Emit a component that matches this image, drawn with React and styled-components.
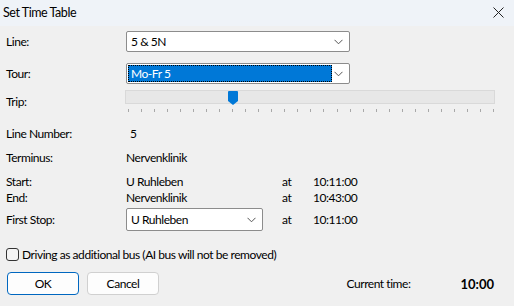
import styled, { createGlobalStyle } from "styled-components";

const Global = createGlobalStyle`
  html, body { margin: 0; padding: 0; background: #f0f0f0; }
  body { font-family: Lato, "Noto Sans", sans-serif; font-size: 12px; letter-spacing: -0.45px; color: #000; }
`;

const Dialog = styled.div`
  width: 514px;
  height: 306px;
  background: #f0f0f0;
  display: flex;
  flex-direction: column;
  overflow: hidden;
`;

const TitleBar = styled.div`
  height: 24px;
  background: #eff3f8;
  display: flex;
  align-items: center;
  justify-content: space-between;
  padding: 0 10px 2px 3px;
  font-size: 12.5px;
`;

const Body = styled.div`
  padding: 5px 0 0 6px;
  display: flex;
  flex-direction: column;
`;

const Row = styled.div`
  display: flex;
  align-items: ${(p) => p.align || "center"};
  height: ${(p) => p.h || 16}px;
  margin-top: ${(p) => p.mt || 0}px;
`;

const Label = styled.div`
  width: ${(p) => p.w || 120}px;
  flex-shrink: 0;
  margin-top: ${(p) => p.mt || 0}px;
`;

const Value = styled.div`
  width: ${(p) => p.w || 156}px;
  padding-left: ${(p) => p.pl || 0}px;
  flex-shrink: 0;
`;

const Combo = styled.div`
  width: ${(p) => p.w}px;
  height: ${(p) => p.h || 21}px;
  box-sizing: border-box;
  background: #fff;
  border: 1px solid #8c8c8c;
  border-radius: 2px;
  display: flex;
  align-items: center;
  padding: 1px;
  position: relative;
`;

const ComboText = styled.div`
  flex: 1;
  height: 100%;
  display: flex;
  align-items: center;
  padding-left: 3px;
  box-sizing: border-box;
  ${(p) =>
    p.selected &&
    `
    background: #0078d7;
    color: #fff;
    outline: 1px dotted #000;
    outline-offset: -1px;
    margin-right: 16px;
  `}
`;

const Chevron = styled.svg`
  position: absolute;
  right: 6px;
  top: 50%;
  margin-top: -3px;
`;

const Track = styled.div`
  width: 370px;
  height: 14px;
  box-sizing: border-box;
  background: #e7e7e7;
  border: 1px solid #d9d9d9;
  position: relative;
`;

const Thumb = styled.svg`
  position: absolute;
  left: 102px;
  top: 0px;
`;

const Ticks = styled.div`
  display: flex;
  justify-content: space-between;
  width: 366px;
  margin-left: 122px;
  margin-top: 5px;
  height: 3px;
`;

const Tick = styled.span`
  width: 1px;
  height: 3px;
  background: #a8a8a8;
`;

const Check = styled.span`
  width: 13px;
  height: 13px;
  box-sizing: border-box;
  border: 1px solid #333;
  border-radius: 3px;
  background: #f4f4f4;
  margin-right: 3px;
`;

const Footer = styled.div`
  display: flex;
  align-items: center;
  padding: 0 0 0 7px;
  margin-top: 11px;
  height: 23px;
`;

const Button = styled.button`
  width: 72px;
  height: 23px;
  margin-right: 8px;
  font: inherit;
  letter-spacing: inherit;
  background: #fdfdfd;
  border: 1px solid ${(p) => (p.primary ? "#0067c0" : "#d0d0d0")};
  border-radius: 4px;
  color: #000;
  padding: 0;
`;

const Current = styled.div`
  margin-left: auto;
  display: flex;
  align-items: center;
  padding-right: 20px;
`;

const Clock = styled.span`
  font-weight: bold;
  font-size: 13px;
  letter-spacing: 0;
  margin-left: 50px;
`;

const ChevronIcon = () => (
  <Chevron width="9" height="6" viewBox="0 0 9 6">
    <path d="M0.5 0.8 L4.5 4.8 L8.5 0.8" fill="none" stroke="#555" strokeWidth="1" />
  </Chevron>
);

export default function App() {
  const ticks = Array.from({ length: 29 });
  return (
    <Dialog>
      <Global />
      <TitleBar>
        <span>Set Time Table</span>
        <svg width="11" height="11" viewBox="0 0 11 11">
          <path d="M0.5 0.5 L10.5 10.5 M10.5 0.5 L0.5 10.5" stroke="#222" strokeWidth="1" />
        </svg>
      </TitleBar>
      <Body>
        <Row h={21}>
          <Label>Line:</Label>
          <Combo w={224}>
            <ComboText>5 &amp; 5N</ComboText>
            <ChevronIcon />
          </Combo>
        </Row>
        <Row h={21} mt={11}>
          <Label>Tour:</Label>
          <Combo w={224}>
            <ComboText selected>Mo-Fr 5</ComboText>
            <ChevronIcon />
          </Combo>
        </Row>
        <Row h={14} mt={6} align="flex-start">
          <Label w={119} mt={4}>Trip:</Label>
          <Track>
            <Thumb width="10" height="14" viewBox="0 0 10 14">
              <path d="M1 0 H9 Q10 0 10 1 V10 L5 14 L0 10 V1 Q0 0 1 0 Z" fill="#0078d7" />
            </Thumb>
          </Track>
        </Row>
        <Ticks>
          {ticks.map((_, i) => (
            <Tick key={i} />
          ))}
        </Ticks>
        <Row mt={13}>
          <Label>Line Number:</Label>
          <Value pl={4}>5</Value>
        </Row>
        <Row mt={8}>
          <Label>Terminus:</Label>
          <Value>Nervenklinik</Value>
        </Row>
        <Row mt={8}>
          <Label>Start:</Label>
          <Value>U Ruhleben</Value>
          <Value w={31}>at</Value>
          <Value>10:11:00</Value>
        </Row>
        <Row>
          <Label>End:</Label>
          <Value>Nervenklinik</Value>
          <Value w={31}>at</Value>
          <Value>10:43:00</Value>
        </Row>
        <Row h={23} mt={3}>
          <Label>First Stop:</Label>
          <Value>
            <Combo w={137} h={23}>
              <ComboText>U Ruhleben</ComboText>
              <ChevronIcon />
            </Combo>
          </Value>
          <Value w={31}>at</Value>
          <Value>10:11:00</Value>
        </Row>
        <Row h={14} mt={16}>
          <Check />
          <span>Driving as additional bus (AI bus will not be removed)</span>
        </Row>
      </Body>
      <Footer>
        <Button primary>OK</Button>
        <Button>Cancel</Button>
        <Current>
          <span>Current time:</span>
          <Clock>10:00</Clock>
        </Current>
      </Footer>
    </Dialog>
  );
}
